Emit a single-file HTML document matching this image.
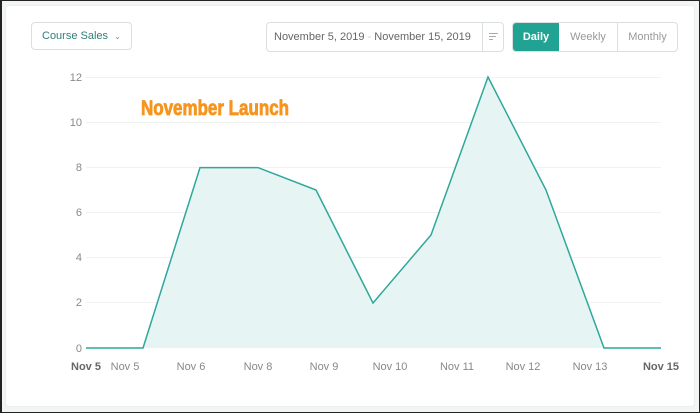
<!DOCTYPE html>
<html><head><style>
html,body{margin:0;padding:0;}
body{width:700px;height:413px;background:#222;position:relative;overflow:hidden;font-family:"Liberation Sans",sans-serif;}
.frame{position:absolute;left:2px;top:1px;right:1px;bottom:1px;background:#f3f4f4;}
.card{position:absolute;left:5px;top:5px;width:688px;height:400px;background:#fff;border:1px solid #eceeee;border-radius:4px;}
.btn{position:absolute;border:1px solid #dcdfe0;border-radius:4px;background:#fff;font-size:11px;color:#7a7f82;box-sizing:border-box;}
</style></head><body>
<div class="frame"></div>
<div class="card"></div>
<div class="btn" style="left:31px;top:22px;width:101px;height:28px;line-height:26px;padding-left:10px;color:#2e7f78;">Course Sales <span style="font-size:8px;color:#888;margin-left:3px">&#8964;</span></div>
<div class="btn" style="left:266px;top:22px;width:238px;height:30px;line-height:28px;padding-left:7px;color:#666;">November 5, 2019 <span style="color:#ccc">-</span> November 15, 2019
<div style="position:absolute;left:215px;top:0;width:1px;height:28px;background:#dcdfe0"></div>
<svg style="position:absolute;left:222px;top:9px" width="10" height="10"><path d="M0 1.5H9M0 4.5H7M0 7.5H4" stroke="#aaa" stroke-width="1"/></svg></div>
<div class="btn" style="left:512px;top:22px;width:166px;height:30px;overflow:hidden;">
<div style="position:absolute;left:0;top:0;width:46px;height:28px;background:#21a394;color:#fff;text-align:center;line-height:28px;font-weight:bold">Daily</div>
<div style="position:absolute;left:46px;top:0;width:58px;height:28px;text-align:center;line-height:28px;border-right:1px solid #dcdfe0;color:#999">Weekly</div>
<div style="position:absolute;left:105px;top:0;width:59px;height:28px;text-align:center;line-height:28px;color:#999">Monthly</div>
</div>
<svg style="position:absolute;left:0;top:0" width="700" height="413" font-family="Liberation Sans, sans-serif">
<g stroke="#f0f2f2" stroke-width="1">
<line x1="86" x2="661" y1="77.5" y2="77.5"/><line x1="86" x2="661" y1="122.5" y2="122.5"/><line x1="86" x2="661" y1="167.5" y2="167.5"/><line x1="86" x2="661" y1="212.5" y2="212.5"/><line x1="86" x2="661" y1="257.5" y2="257.5"/><line x1="86" x2="661" y1="302.5" y2="302.5"/><line x1="86" x2="661" y1="347.5" y2="347.5"/>
</g>
<g font-size="11" fill="#888" text-anchor="end">
<text x="82" y="81">12</text><text x="82" y="126">10</text><text x="82" y="171">8</text><text x="82" y="216">6</text><text x="82" y="261">4</text><text x="82" y="306">2</text><text x="82" y="352">0</text>
</g>
<polygon points="86,348 143,348 200,167.6 258,167.6 316,190 373,303 431,235 488,77 546,190 604,348 661,348" fill="#e6f5f3"/>
<polyline points="86,348 143,348 200,167.6 258,167.6 316,190 373,303 431,235 488,77 546,190 604,348 661,348" fill="none" stroke="#2fa79a" stroke-width="1.5"/>
<g font-size="11" fill="#888" text-anchor="middle">
<text x="86" y="370" font-weight="bold" fill="#666">Nov 5</text><text x="125" y="370">Nov 5</text><text x="191" y="370">Nov 6</text><text x="258" y="370">Nov 8</text><text x="324" y="370">Nov 9</text><text x="390" y="370">Nov 10</text><text x="457" y="370">Nov 11</text><text x="523" y="370">Nov 12</text><text x="590" y="370">Nov 13</text><text x="661" y="370" font-weight="bold" fill="#666">Nov 15</text>
</g>
<text x="141" y="115" font-size="21" font-weight="bold" fill="#f7941d" stroke="#f7941d" stroke-width="0.8" textLength="148" lengthAdjust="spacingAndGlyphs" font-family="Liberation Sans Narrow, Liberation Sans, sans-serif">November Launch</text>
</svg>
</body></html>
